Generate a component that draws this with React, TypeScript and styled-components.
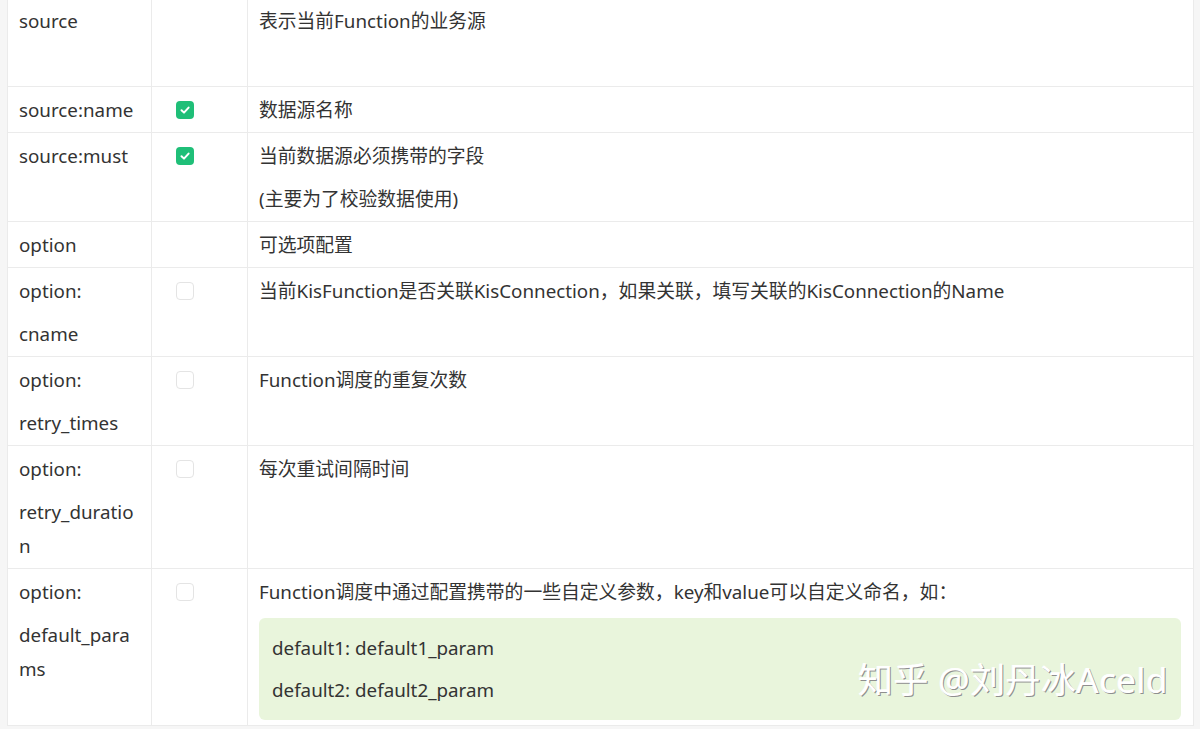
import React from "react";
import styled, { createGlobalStyle } from "styled-components";

type Param = {
  name: string[];
  required?: boolean;
  hasBox: boolean;
  desc: string[];
  code?: string[];
  tall?: boolean;
};

const params: Param[] = [
  { name: ["source"], hasBox: false, desc: ["表示当前Function的业务源"], tall: true },
  { name: ["source:name"], hasBox: true, required: true, desc: ["数据源名称"] },
  {
    name: ["source:must"],
    hasBox: true,
    required: true,
    desc: ["当前数据源必须携带的字段", "(主要为了校验数据使用)"],
  },
  { name: ["option"], hasBox: false, desc: ["可选项配置"] },
  {
    name: ["option:", "cname"],
    hasBox: true,
    desc: ["当前KisFunction是否关联KisConnection，如果关联，填写关联的KisConnection的Name"],
  },
  { name: ["option:", "retry_times"], hasBox: true, desc: ["Function调度的重复次数"] },
  { name: ["option:", "retry_duration"], hasBox: true, desc: ["每次重试间隔时间"] },
  {
    name: ["option:", "default_params"],
    hasBox: true,
    desc: ["Function调度中通过配置携带的一些自定义参数，key和value可以自定义命名，如："],
    code: ["default1: default1_param", "default2: default2_param"],
  },
];

const GlobalStyle = createGlobalStyle`
  html, body {
    margin: 0;
    padding: 0;
    background: #f6f6f6;
  }
  body {
    font-family: "Noto Sans", "Noto Sans CJK SC", sans-serif;
    color: #333;
  }
`;

const Page = styled.div`
  position: relative;
  height: 729px;
  overflow: hidden;
  padding-left: 7px;
  background: #f6f6f6;
`;

const Table = styled.div`
  width: 1185px;
  margin-top: -2px;
  background: #fff;
  border-left: 1px solid #ebebeb;
  border-right: 1px solid #ebebeb;
`;

const Row = styled.div<{ $tall?: boolean }>`
  display: grid;
  grid-template-columns: 144px 96px 1fr;
  border-bottom: 1px solid #ebebeb;
  min-height: ${(p) => (p.$tall ? "88px" : "0")};
`;

const Cell = styled.div`
  display: flex;
  flex-direction: column;
  gap: 9px;
  padding: 6px 9px 5px 11px;
  font-size: 18.8px;
  line-height: 34px;
  border-right: 1px solid #ebebeb;
  word-break: break-all;

  &:last-child {
    border-right: none;
  }
`;

const Para = styled.div`
  margin: 0;
`;

const BoxWrap = styled.div`
  height: 34px;
  display: flex;
  align-items: center;
  padding-left: 13px;
`;

const Checkbox = styled.span<{ $checked?: boolean }>`
  width: 18px;
  height: 18px;
  box-sizing: border-box;
  border-radius: 4px;
  display: flex;
  align-items: center;
  justify-content: center;
  background: ${(p) => (p.$checked ? "#1fbf78" : "#fff")};
  border: ${(p) => (p.$checked ? "none" : "1px solid #e4e4e4")};
`;

const CodeBlock = styled.div`
  display: flex;
  flex-direction: column;
  gap: 8px;
  margin-right: 3px;
  padding: 13px;
  border-radius: 6px;
  background: #e9f5dc;
  font-size: 18.8px;
  line-height: 34px;
`;

const Watermark = styled.div`
  position: absolute;
  left: 858px;
  top: 659px;
  font-size: 35px;
  line-height: 42px;
  color: #fff;
  letter-spacing: 0.4px;
  text-shadow: 1px 1px 0 #8f8f8f, -0.5px -0.5px 0 rgba(255, 255, 255, 0.8);
  white-space: nowrap;
`;

const Check = () => (
  <svg width="12" height="12" viewBox="0 0 12 12">
    <path
      d="M2.5 6.2 L5 8.6 L9.6 3.6"
      fill="none"
      stroke="#fff"
      strokeWidth="2"
      strokeLinecap="round"
      strokeLinejoin="round"
    />
  </svg>
);

export default function App() {
  return (
    <>
      <GlobalStyle />
      <Page>
        <Table>
          {params.map((p, i) => (
            <Row key={i} $tall={p.tall}>
              <Cell>
                {p.name.map((n) => (
                  <Para key={n}>{n}</Para>
                ))}
              </Cell>
              <Cell>
                {p.hasBox && (
                  <BoxWrap>
                    <Checkbox $checked={p.required}>{p.required && <Check />}</Checkbox>
                  </BoxWrap>
                )}
              </Cell>
              <Cell>
                {p.desc.map((d) => (
                  <Para key={d}>{d}</Para>
                ))}
                {p.code && (
                  <CodeBlock>
                    {p.code.map((c) => (
                      <Para key={c}>{c}</Para>
                    ))}
                  </CodeBlock>
                )}
              </Cell>
            </Row>
          ))}
        </Table>
        <Watermark>知乎 @刘丹冰Aceld</Watermark>
      </Page>
    </>
  );
}
